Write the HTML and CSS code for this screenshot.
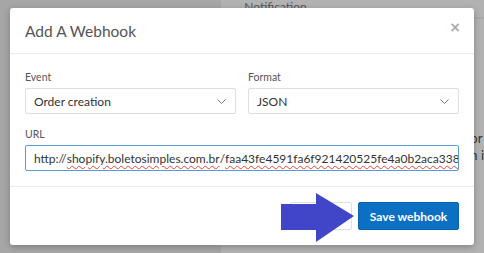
FILE: index.html
```html
<!DOCTYPE html>
<html lang="en">

<head>
    <meta charset="UTF-8">
    <meta name="viewport" content="width=device-width, initial-scale=1.0">
    <title>Add A Webhook</title>
    <link rel="stylesheet" href="styles.css">
</head>

<body>
    <!-- page behind the backdrop -->
    <div class="page">
        <div class="sidebar"></div>
        <div class="main">
            <div class="main-head">Notification</div>
            <div class="main-body">
                <p>or</p>
                <p>n i</p>
            </div>
        </div>
    </div>

    <!-- modal -->
    <div class="modal">
        <div class="modal-header">
            <h4>Add A Webhook</h4>
            <button class="close" type="button">&times;</button>
        </div>
        <div class="modal-body">
            <div class="row">
                <div class="field">
                    <label>Event</label>
                    <div class="select">
                        <span>Order creation</span>
                        <svg width="9" height="5" viewBox="0 0 9 5"><path d="M0.5 0.5l4 4 4-4" fill="none" stroke="#777" stroke-width="1"/></svg>
                    </div>
                </div>
                <div class="field">
                    <label>Format</label>
                    <div class="select">
                        <span>JSON</span>
                        <svg width="9" height="5" viewBox="0 0 9 5"><path d="M0.5 0.5l4 4 4-4" fill="none" stroke="#777" stroke-width="1"/></svg>
                    </div>
                </div>
            </div>
            <div class="field">
                <label>URL</label>
                <div class="input">http://<span class="typo">shopify.boletosimples.com.br</span>/<span class="typo">faa43fe4591fa6f921420525fe4a0b2aca338c1b7e</span></div>
            </div>
        </div>
        <div class="modal-footer">
            <button class="btn btn-default" type="button">Cancel</button>
            <button class="btn btn-primary" type="button">Save webhook</button>
        </div>
    </div>

    <!-- flecha señalando el botón -->
    <svg class="arrow" width="74" height="50" viewBox="0 0 74 50">
        <polygon points="0,11 35,11 35,0 73,23 35,49 35,37 0,37" fill="#4146c9"/>
    </svg>
</body>

</html>
```

FILE: styles.css
```css
/*Reset*/
* {
    margin: 0;
    padding: 0;
    box-sizing: border-box;
}

html,
body {
    width: 484px;
    height: 253px;
    overflow: hidden;
    font-family: 'Lato', 'Open Sans', sans-serif;
    background-color: #a8a8a8;
}

/* Pagina de fondo (debajo del backdrop) */
.page {
    display: flex;
    height: 100%;
}

.sidebar {
    width: 227px;
    background-color: #a6a6a6;
}

.main {
    flex: 1;
    background-color: #b2b2b2;
}

.main-head {
    height: 19px;
    padding-left: 23px;
    font-size: 12px;
    line-height: 14px;
    color: #555;
    border-bottom: 2px solid #a9a9a9;
}

.main-body {
    padding: 111px 0 0 249px;
    font-size: 13px;
    line-height: 17px;
    color: #333;
    white-space: nowrap;
}

/* Modal */
.modal {
    position: absolute;
    left: 10px;
    top: 8px;
    width: 464px;
    height: 237px;
    background-color: #fff;
    border-radius: 3px;
    box-shadow: 0 2px 6px rgba(0, 0, 0, 0.25);
    display: flex;
    flex-direction: column;
}

.modal-header {
    display: flex;
    align-items: center;
    justify-content: space-between;
    height: 46px;
    padding: 0 13px 0 15px;
    border-bottom: 1px solid #eaedf0;
}

.modal-header h4 {
    font-size: 15.5px;
    font-weight: 400;
    color: #555;
}

.close {
    border: 0;
    background: none;
    font-family: 'DejaVu Sans', sans-serif;
    font-size: 14px;
    font-weight: bold;
    color: #aaa;
    line-height: 1;
    margin-top: -7px;
}

.modal-body {
    display: flex;
    flex-direction: column;
    gap: 12px;
    padding: 15px 15px 15px;
    border-bottom: 1px solid #eaedf0;
}

.row {
    display: flex;
    gap: 12px;
}

.row .field {
    flex: 1;
}

.field label {
    display: block;
    font-size: 10.5px;
    line-height: 16px;
    color: #555;
    margin-bottom: 3px;
}

.select,
.input {
    display: flex;
    align-items: center;
    height: 26px;
    padding: 0 9px 0 8px;
    border: 1px solid #dcdfe3;
    border-radius: 2px;
    font-size: 12px;
    color: #333;
}

.select {
    justify-content: space-between;
}

.input {
    border-color: #5b9dd9;
    white-space: nowrap;
    overflow: hidden;
    padding-right: 0;
}

.typo {
    text-decoration: underline wavy #e0443a;
    text-decoration-thickness: 1px;
    text-underline-offset: 2px;
}

/* Footer */
.modal-footer {
    display: flex;
    justify-content: flex-end;
    gap: 6px;
    padding: 15px 15px 0;
}

.btn {
    height: 28px;
    padding: 0 12px;
    border-radius: 2px;
    font-family: 'Lato', 'Open Sans', sans-serif;
    font-size: 12px;
    font-weight: 700;
    white-space: nowrap;
}

.btn-default {
    background-color: #fff;
    border: 1px solid #dcdfe3;
    color: #555;
}

.btn-primary {
    width: 101px;
    padding: 0;
    background-color: #0b6fc3;
    border: 1px solid #0a63ae;
    color: #fff;
}

/* Flecha */
.arrow {
    position: absolute;
    left: 281px;
    top: 193px;
}
```
